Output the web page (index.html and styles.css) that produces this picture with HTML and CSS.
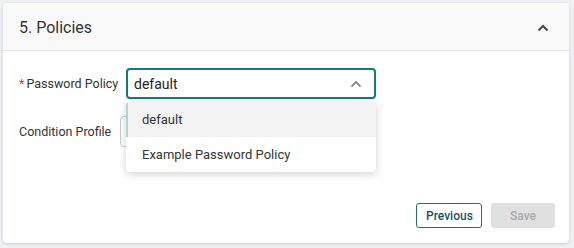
FILE: index.html
```html
<!DOCTYPE html>
<html lang="en">
<head>
    <meta charset="UTF-8">
    <title>Policies</title>
    <link rel="stylesheet" href="styles.css">
</head>
<body>
    <div class="card">
        <div class="card-header">
            <h2>5. Policies</h2>
            <svg class="chevron" width="12" height="8" viewBox="0 0 12 8">
                <path d="M1.5 6.5 L6 2 L10.5 6.5" fill="none" stroke="#444" stroke-width="2"/>
            </svg>
        </div>
        <div class="card-body">
            <div class="form-row">
                <label class="field-label"><span class="req">*</span>Password Policy</label>
                <div class="select-wrap">
                    <div class="select open">
                        <span>default</span>
                        <svg width="12" height="8" viewBox="0 0 12 8">
                            <path d="M1.5 6.5 L6 2 L10.5 6.5" fill="none" stroke="#777" stroke-width="1.6"/>
                        </svg>
                    </div>
                    <ul class="menu">
                        <li class="active">default</li>
                        <li>Example Password Policy</li>
                    </ul>
                </div>
            </div>
            <div class="form-row">
                <label class="field-label">Condition Profile</label>
                <div class="select plain"></div>
            </div>
        </div>
        <div class="card-footer">
            <button class="btn btn-outline">Previous</button>
            <button class="btn btn-disabled" disabled>Save</button>
        </div>
    </div>
</body>
</html>
```

FILE: styles.css
```css
* {
    margin: 0;
    padding: 0;
    box-sizing: border-box;
    font-family: Roboto, 'Liberation Sans', sans-serif;
}

body {
    background-color: #eef0f4;
    padding: 3px 5px 5px 3px;
    color: #222;
}

.card {
    background-color: #fff;
    border-radius: 4px;
    box-shadow: 0 1px 3px rgba(0, 0, 0, 0.15);
    height: 240px;
    display: flex;
    flex-direction: column;
}

.card-header {
    background-color: #f9f9f9;
    border-bottom: 1px solid #dde8ea;
    border-radius: 4px 4px 0 0;
    height: 48px;
    display: flex;
    align-items: center;
    justify-content: space-between;
    padding: 0 20px 0 16px;
}

.card-header h2 {
    font-size: 16px;
    font-weight: 400;
    color: #333;
    padding-top: 1px;
}

.chevron {
    margin-top: 2px;
}

.card-body {
    flex: 1;
    padding: 17px 0 0 16px;
}

.form-row {
    display: flex;
    align-items: center;
    margin-bottom: 17px;
}

.field-label {
    width: 107px;
    font-size: 12.5px;
    color: #333;
}

.form-row:nth-child(2) .field-label {
    width: 101px;
}

.req {
    color: #d33;
    margin-right: 2px;
}

.select-wrap {
    position: relative;
}

.select {
    width: 250px;
    height: 31px;
    border: 1px solid #ccc;
    border-radius: 4px;
    display: flex;
    align-items: center;
    justify-content: space-between;
    padding: 0 12px 0 7px;
    font-size: 14px;
}

.select.open {
    border: 2px solid #0e7c7b;
    padding-left: 6px;
    color: #222;
}

.select.plain {
    height: 31px;
}

.menu {
    position: absolute;
    top: 34px;
    left: 0;
    width: 250px;
    list-style: none;
    background-color: #fff;
    border-radius: 4px;
    box-shadow: 0 2px 8px rgba(0, 0, 0, 0.18);
    z-index: 2;
    overflow: hidden;
}

.menu li {
    height: 35px;
    line-height: 35px;
    padding-left: 16px;
    font-size: 13px;
    color: #333;
}

.menu li.active {
    background-color: #f3f3f3;
    border-left: 2px solid #a9d6d6;
    padding-left: 14px;
}

.card-footer {
    display: flex;
    justify-content: flex-end;
    gap: 9px;
    padding: 0 14px 15px 0;
}

.btn {
    height: 25px;
    border-radius: 3px;
    font-size: 12px;
    font-weight: 500;
    padding: 0 9px;
}

.btn-outline {
    background-color: #fff;
    border: 1px solid #1f6d7c;
    color: #1d4f66;
    width: 66px;
}

.btn-disabled {
    background-color: #e0e0e0;
    border: none;
    color: #aaa;
    width: 64px;
}
```
